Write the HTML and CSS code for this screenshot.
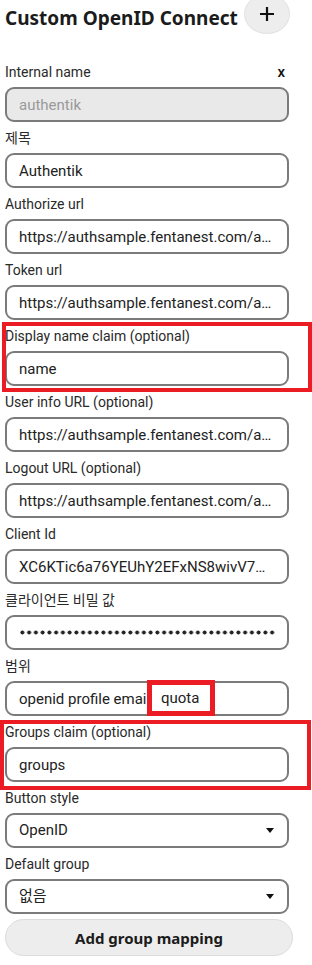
FILE: index.html
```html
<!DOCTYPE html>
<html lang="ko">
<head>
    <meta charset="UTF-8">
    <title>Custom OpenID Connect</title>
    <link rel="stylesheet" href="styles.css">
</head>
<body>

<div class="page">
    <div class="header">
        <h2 class="title">Custom OpenID Connect</h2>
        <button class="add-btn" type="button">
            <svg width="16" height="16" viewBox="0 0 16 16"><path d="M8 1v14M1 8h14" stroke="#111" stroke-width="2.2"/></svg>
        </button>
    </div>

    <div class="field">
        <div class="label label-row"><span>Internal name</span><span class="close">x</span></div>
        <input class="input" type="text" value="authentik" disabled>
    </div>
    <div class="field">
        <div class="label">제목</div>
        <input class="input" type="text" value="Authentik">
    </div>
    <div class="field">
        <div class="label">Authorize url</div>
        <input class="input" type="text" value="https://authsample.fentanest.com/application/o/authorize/">
    </div>
    <div class="field">
        <div class="label">Token url</div>
        <input class="input" type="text" value="https://authsample.fentanest.com/application/o/token/">
    </div>
    <div class="field marked marked-name">
        <div class="label">Display name claim (optional)</div>
        <input class="input" type="text" value="name">
    </div>
    <div class="field">
        <div class="label">User info URL (optional)</div>
        <input class="input" type="text" value="https://authsample.fentanest.com/application/o/userinfo/">
    </div>
    <div class="field">
        <div class="label">Logout URL (optional)</div>
        <input class="input" type="text" value="https://authsample.fentanest.com/application/o/filerun/end-session/">
    </div>
    <div class="field">
        <div class="label">Client Id</div>
        <input class="input" type="text" value="XC6KTic6a76YEUhY2EFxNS8wivV7WqP3mLr0">
    </div>
    <div class="field">
        <div class="label">클라이언트 비밀 값</div>
        <div class="input secret"><span class="dots"></span></div>
    </div>
    <div class="field">
        <div class="label">범위</div>
        <div class="scope">
            <input class="input" type="text" value="openid profile email">
            <span class="scope-mark">quota</span>
        </div>
    </div>
    <div class="field marked marked-groups">
        <div class="label">Groups claim (optional)</div>
        <input class="input" type="text" value="groups">
    </div>
    <div class="field">
        <div class="label">Button style</div>
        <div class="input select"><span>OpenID</span><svg width="8" height="5" viewBox="0 0 8 5"><path d="M0 0h8L4 5z" fill="#111"/></svg></div>
    </div>
    <div class="field">
        <div class="label">Default group</div>
        <div class="input select"><span>없음</span><svg width="8" height="5" viewBox="0 0 8 5"><path d="M0 0h8L4 5z" fill="#111"/></svg></div>
    </div>

    <button class="mapping-btn" type="button">Add group mapping</button>
</div>

</body>
</html>
```

FILE: styles.css
```css
*{
    margin: 0;
    padding: 0;
    box-sizing: border-box;
}
body{
    font-family: Roboto, "Noto Sans CJK KR", sans-serif;
    color: #222;
    background: #fff;
    overflow: hidden;
}
.page{
    padding: 0 0 0 5px;
}
.header{
    display: flex;
    align-items: center;
    gap: 6px;
    height: 40px;
    margin-top: -6px;
    margin-bottom: 27px;
}
.title{
    font-family: "Noto Sans", "Noto Sans CJK KR", sans-serif;
    font-size: 19px;
    font-weight: 700;
    color: #1b1b1b;
    margin-top: 7px;
    white-space: nowrap;
}
.add-btn{
    width: 46px;
    height: 40px;
    border-radius: 50%;
    border: 1px solid #e2e2e2;
    background: #ededed;
    display: flex;
    align-items: center;
    justify-content: center;
}
.field{
    width: 284px;
    margin-bottom: 5px;
    position: relative;
}
.label{
    font-size: 14px;
    line-height: 22px;
    height: 22px;
    color: #2a2a2a;
    margin-bottom: 4px;
    white-space: nowrap;
}
.label-row{
    display: flex;
    justify-content: space-between;
    padding-right: 4px;
}
.close{
    font-size: 15px;
    font-weight: 500;
    color: #111;
}
.input{
    display: block;
    width: 284px;
    height: 35px;
    border: 2px solid #7b7b7b;
    border-radius: 9px;
    padding: 0 12px;
    font-family: Roboto, "Noto Sans CJK KR", sans-serif;
    font-size: 15px;
    line-height: 31px;
    color: #222;
    background: #fff;
    text-overflow: ellipsis;
    white-space: nowrap;
    overflow: hidden;
    outline: none;
}
.input:disabled{
    background: #e9e9e9;
    color: #9a9a9a;
}
.secret{
    display: flex;
    align-items: center;
}
.dots{
    display: block;
    width: 257px;
    height: 5px;
    background-image: radial-gradient(circle, #222 1.7px, transparent 2.3px);
    background-size: 6.76px 5px;
    background-repeat: repeat-x;
}
.select{
    display: flex;
    align-items: center;
    justify-content: space-between;
    padding-right: 13px;
}
.scope{
    position: relative;
}
.scope-mark{
    position: absolute;
    left: 142px;
    top: -1px;
    width: 68px;
    height: 36px;
    border: 5px solid #ec1c24;
    background: #fff;
    font-size: 15px;
    line-height: 26px;
    padding-left: 9px;
    color: #222;
}
.marked::after{
    content: "";
    position: absolute;
    border: 4px solid #ec1c24;
}
.marked-name::after{
    top: -3px;
    bottom: -6px;
    left: -3px;
    right: -23px;
}
.marked-groups::after{
    top: -1px;
    bottom: -8px;
    left: -5px;
    right: -22px;
}
.mapping-btn{
    display: block;
    width: 288px;
    height: 37px;
    margin-top: 2px;
    border: 1px solid #dcdcdc;
    border-radius: 19px;
    background: #ededed;
    font-family: "Noto Sans", "Noto Sans CJK KR", sans-serif;
    font-size: 15px;
    font-weight: 700;
    color: #1b1b1b;
}
```
